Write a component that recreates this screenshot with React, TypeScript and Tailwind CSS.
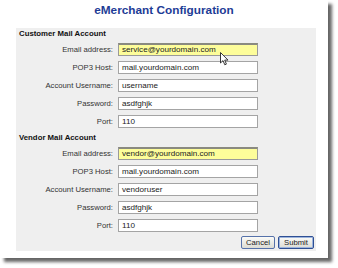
import React from "react";

type Field = { label: string; value: string; active?: boolean };

const customer: Field[] = [
  { label: "Email address:", value: "service@yourdomain.com", active: true },
  { label: "POP3 Host:", value: "mail.yourdomain.com" },
  { label: "Account Username:", value: "username" },
  { label: "Password:", value: "asdfghjk" },
  { label: "Port:", value: "110" },
];

const vendor: Field[] = [
  { label: "Email address:", value: "vendor@yourdomain.com", active: true },
  { label: "POP3 Host:", value: "mail.yourdomain.com" },
  { label: "Account Username:", value: "vendoruser" },
  { label: "Password:", value: "asdfghjk" },
  { label: "Port:", value: "110" },
];

function Cursor() {
  return (
    <svg
      className="absolute left-[220px] top-[52px]"
      width="9"
      height="14"
      viewBox="0 0 9 14"
    >
      <path
        d="M0.5 0.5 L0.5 11 L3 8.6 L4.8 12.8 L6.4 12.1 L4.7 8.1 L8 8.1 Z"
        fill="#fff"
        stroke="#222"
        strokeWidth="0.9"
        strokeLinejoin="round"
      />
    </svg>
  );
}

function Section({ title, fields }: { title: string; fields: Field[] }) {
  return (
    <div className="flex flex-col">
      <div className="pl-[3px] h-[10px] leading-[10px] font-bold text-[7.8px] text-[#111]">{title}</div>
      <div className="mt-[4px] flex flex-col gap-[5px]">
        {fields.map((f) => (
          <div key={f.label} className="grid grid-cols-[102px_140px] items-center h-[13px]">
            <span className="text-right pr-[5px] text-[7.7px] text-[#333]">{f.label}</span>
            <div
              className={
                f.active
                  ? "h-[13px] border border-[#9a9a9a] border-t-2 border-t-[#8a8a80] bg-[#fdfd9a] pl-[3px] text-[8.1px] leading-[10px] text-[#222] flex items-center"
                  : "h-[13px] border border-[#a4a4a4] bg-white pl-[3px] text-[8.1px] leading-[11px] text-[#222] flex items-center"
              }
            >
              {f.value}
            </div>
          </div>
        ))}
      </div>
    </div>
  );
}

export default function App() {
  return (
    <div className="w-[338px] h-[268px] bg-white relative overflow-hidden font-['Liberation_Sans',Arial,sans-serif]">
      <div className="w-[328px] h-[258px] bg-white shadow-[4px_4px_3px_rgba(0,0,0,0.6)] flex flex-col">
        <h1 className="pt-[3px] h-[28px] text-center text-[11.8px] leading-[14px] font-bold text-[#1e3c96]">
          eMerchant Configuration
        </h1>
        <div className="ml-[16px] w-[300px] h-[223px] bg-[#efefef] pt-[1px] flex flex-col">
          <Section title="Customer Mail Account" fields={customer} />
          <div className="mt-[5px]">
            <Section title="Vendor Mail Account" fields={vendor} />
          </div>
          <div className="mt-[4px] pr-[2px] flex justify-end gap-[3px]">
            <button className="w-[34px] h-[13px] rounded-[2px] border border-[#5672aa] bg-gradient-to-b from-[#fbfbf8] to-[#dcdcd4] text-[7.7px] leading-[10px] text-[#222]">
              Cancel
            </button>
            <button className="w-[36px] h-[13px] rounded-[2px] border border-[#2e4f94] shadow-[inset_0_0_0_1px_#9db4dc] bg-gradient-to-b from-[#fbfbf8] to-[#dcdcd4] text-[7.7px] leading-[10px] text-[#222]">
              Submit
            </button>
          </div>
        </div>
      </div>
      <Cursor />
    </div>
  );
}
